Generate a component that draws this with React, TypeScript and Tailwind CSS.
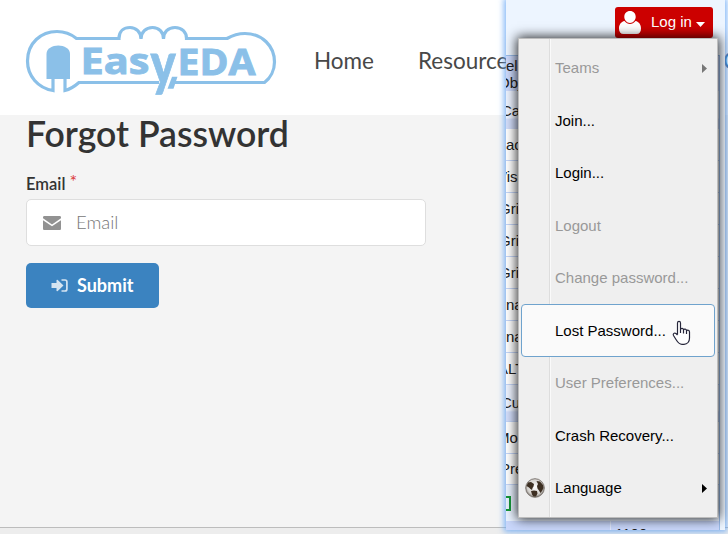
import React from 'react';

type MenuItem = { label: string; disabled?: boolean; arrow?: boolean; active?: boolean; globe?: boolean };

const menuItems: MenuItem[] = [
  { label: 'Teams', disabled: true, arrow: true },
  { label: 'Join...' },
  { label: 'Login...' },
  { label: 'Logout', disabled: true },
  { label: 'Change password...', disabled: true },
  { label: 'Lost Password...', active: true },
  { label: 'User Preferences...', disabled: true },
  { label: 'Crash Recovery...' },
  { label: 'Language', arrow: true, globe: true },
];

const gridRows = [
  { label: 'Background', look: 'h-8 bg-white' },
  { label: 'Visible Grid', look: 'h-8 bg-white' },
  { label: 'Grid Color', look: 'h-8 bg-white' },
  { label: 'Grid Style', look: 'h-8 bg-white' },
  { label: 'Grid Size', look: 'h-8 bg-white' },
  { label: 'Snap', look: 'h-8 bg-white' },
  { label: 'Snap Size', look: 'h-8 bg-white' },
  { label: 'ALT Snap', look: 'h-8 bg-white' },
  { label: 'Custom', look: 'h-[37px] bg-linear-to-b from-[#edf3ff] from-70% to-[#d3defb] to-75%' },
  { label: 'Mouse-X', look: 'h-8 bg-white' },
  { label: 'Preview', look: 'h-[31px] bg-white' },
];

const labelShift = [-10, -9, -7, -7, -7, -10, -10, -8, -5, -9, -6];

function Logo() {
  return (
    <svg className="mt-[25px] ml-[25px] h-[72px] w-[252px] shrink-0" viewBox="25 25 252 72" fill="none">
      <path
        d="M53 79V90.500C38 88 27.500 76 27.500 61C27.500 43 41 31.500 57 31.500C65 31.500 71 34 76.500 38.500H119C119 31 124 27.500 130 27.500C136 27.500 141 32 141 39C141 32 146 27.500 152.500 27.500C159 27.500 163.500 32 163.500 39C163.500 32 168 27.500 175 27.500C182 27.500 186.500 32 186.500 38.500H227C233 35 239 33.500 245 33.500C262 33.500 274.500 46 274.500 62C274.500 70 270.500 78 264.500 82.500H174.500M159 82.500H79C75 86 71 89 65 90.500V79"
        stroke="#8bc0e8"
        strokeWidth="3.200"
      />
      <path d="M46.500 79V54C46.500 42.500 70 42.500 70 54V79Z" fill="#8bc0e8" />
      <path d="M172 76.700H177.500L173.500 88.700H167.500Z" fill="#8bc0e8" />
      <g fill="#8bc0e8" stroke="#8bc0e8" strokeWidth="0.900" fontFamily="'Open Sans', sans-serif" fontWeight="700">
        <text x="80.500" y="73.500" fontSize="36" textLength="69" lengthAdjust="spacingAndGlyphs">Eas</text>
        <text x="177.500" y="75" fontSize="36" textLength="78" lengthAdjust="spacingAndGlyphs">EDA</text>
      </g>
      <text x="0" y="0" transform="translate(150.500 84.500) scale(0.8 1)" fill="#8bc0e8" stroke="#8bc0e8" strokeWidth="0.800" fontFamily="Lato, sans-serif" fontWeight="900" fontSize="59">y</text>
    </svg>
  );
}

function Globe() {
  return (
    <svg className="h-5 w-5" viewBox="0 0 20 20">
      <defs>
        <radialGradient id="globeShade" cx="50%" cy="45%" r="55%">
          <stop offset="0" stopColor="#fff" />
          <stop offset="0.75" stopColor="#d3d0cc" />
          <stop offset="1" stopColor="#77716b" />
        </radialGradient>
      </defs>
      <circle cx="10" cy="10" r="9.300" fill="url(#globeShade)" stroke="#77716b" strokeWidth="0.900" />
      <path d="M1.500 8L3 4.500L6 4L9 6L8.500 8.500L7.500 10L7 12L5.500 11L4 9.500ZM6 13L9 12.500L12 13L12.500 15.500L11 18.500H8.500L7 16.500ZM11.500 3L15 3.500L18 7L18.500 10L17 13L15.500 15L14 12.500L12.500 10.500L12 8L13 6Z" fill="#3d2f22" />
    </svg>
  );
}

function AccountMenu() {
  return (
    <div className="absolute top-[38px] left-3 flex h-[480px] w-[200px] flex-col border border-[#bdbdbd] bg-[linear-gradient(90deg,#efefef_30px,#dddddd_30px,#dddddd_31px,#fafafa_31px,#fafafa_32px,#efefef_32px)] px-0.5 pt-[3px] text-[15px] shadow-[0_0_11px_1px_rgba(0,0,0,0.85)]">
      {menuItems.map((item) => (
        <div
          key={item.label}
          className={`flex w-[194px] shrink-0 items-center rounded-[4px] border ${
            item.active ? '-mt-px h-[53.5px] border-[#6fa3cd] bg-[#fafafa] pt-px' : 'h-[52.5px] border-transparent'
          } ${item.disabled ? 'text-[#999999]' : 'text-black'}`}
        >
          <span className="flex w-[33px] shrink-0 pl-[3px]">{item.globe && <Globe />}</span>
          <span className="grow whitespace-nowrap">{item.label}</span>
          {item.arrow && (
            <svg className={`mr-[7px] h-[9px] w-[5px] ${item.disabled ? 'text-[#777777]' : 'text-black'}`} viewBox="0 0 5 9">
              <path d="M0 0L5 4.500L0 9Z" fill="currentColor" />
            </svg>
          )}
        </div>
      ))}
    </div>
  );
}

function EditorWindow() {
  return (
    <aside className="absolute top-0 left-[506px] h-[530px] w-[219px] font-['Liberation_Sans',Arial,sans-serif] shadow-[0_0_6px_2px_rgba(100,165,245,0.8)]">
      <div className="flex h-full flex-col overflow-hidden bg-[#edf5ff] text-[15px] text-[#202020]">
        <div className="flex h-[55px] shrink-0 justify-end pr-3 pt-[7px]">
          <button className="flex h-[31px] w-[98px] items-center rounded-[3px] bg-[#cc0000] pl-1 text-white">
            <svg className="h-[23px] w-[22px]" viewBox="0 0 22 23">
              <path d="M11 0C14.500 0 16.700 2.600 16.700 5.800S14.500 12 11 12S5.300 9 5.300 5.800S7.500 0 11 0ZM5.500 10C7 12 9 13 11 13S15 12 16.500 10C20 10.700 22 13.700 22 17.500C22 21 20.500 23 17.500 23H4.500C1.500 23 0 21 0 17.500C0 13.700 2 10.700 5.500 10Z" fill="#fff" />
            </svg>
            <span className="ml-2.5 whitespace-nowrap">Log in</span>
            <svg className="ml-1 mt-[3px] h-[5px] w-[9px]" viewBox="0 0 9 5">
              <path d="M0 0H9L4.500 5Z" fill="#fff" />
            </svg>
          </button>
        </div>
        <div className="flex w-[214px] grow flex-col overflow-hidden border-t border-r border-[#99bbe8]">
          <div className="h-[35px] shrink-0 overflow-hidden bg-[#ccd9fb] pt-px leading-[17px]">
            <div className="-ml-[10px]">Selected</div>
            <div className="-ml-[8px]">Objects</div>
          </div>
          <div className="h-[38px] shrink-0 bg-linear-to-b from-[#edf3ff] from-70% to-[#d3defb] to-75% leading-[40px]">
            <div className="-ml-[5px]">Canvas</div>
          </div>
          {gridRows.map((row, i) => (
            <div key={row.label} className={`flex shrink-0 items-center whitespace-nowrap border-b border-[#c5d6f8] pt-px ${row.look}`}>
              <span style={{ marginLeft: labelShift[i] }}>{row.label}</span>
            </div>
          ))}
          <div className="flex h-[36px] shrink-0 items-center bg-[#e9f2ff]">
            <div className="-ml-2 h-[15px] w-[13px] border-2 border-[#15983a]" />
          </div>
          <div className="flex grow overflow-hidden bg-[#c9d7fb]">
            <div className="w-[105px] border-r border-[#e1e9fd]" />
            <div className="pl-1 pt-[6px] text-[15px] leading-[14px]">1100</div>
          </div>
        </div>
      </div>
      <AccountMenu />
      <svg className="absolute left-[166px] top-[320px] h-[26px] w-5" viewBox="0 0 20 26">
        <path
          d="M5.500 14.500V3C5.500 0.800 8.500 0.800 8.500 3V9.500C9 7.800 11.500 8 11.500 10C12 8.500 14.500 8.800 14.500 10.800C15.500 9.500 17.500 10.300 17.500 12V18C17.500 21.500 15.500 24.300 12 24.300H10C7 24.300 5.500 22 4 19.500L1.500 15.500C0.500 13.500 2.500 12.500 4 13.500L5.500 15M8.500 9.500V13M11.500 10V13.500M14.500 11V14"
          fill="#fff"
          stroke="#26263a"
          strokeWidth="1.200"
          strokeLinejoin="round"
        />
      </svg>
    </aside>
  );
}

export default function App() {
  return (
    <div className="relative flex h-[534px] w-[728px] flex-col overflow-hidden bg-[#f4f4f4] font-['Lato',sans-serif] text-[#333333]">
      <header className="flex h-[115px] shrink-0 bg-white">
        <Logo />
        <nav className="ml-[37px] flex gap-[44px] pt-[45px] text-[22.500px] leading-8 text-[#484848]">
          <span>Home</span>
          <span className="w-[262px]">Resources</span>
          <span className="-ml-[1px] text-[#31699c]">Contact</span>
        </nav>
      </header>
      <main className="flex grow flex-col px-[26px]">
        <h1 className="h-[39px] text-[35.6px] leading-[37px] font-semibold">Forgot Password</h1>
        <label className="mt-5 flex h-[25px] text-[16.5px] leading-[21px] font-semibold">
          Email<span className="ml-1 -mt-[3px] text-[18px] font-normal text-[#db3b3b]">*</span>
        </label>
        <div className="flex h-[47px] w-[400px] items-center rounded-[5px] border border-[#dedede] bg-white pl-4">
          <svg className="h-[14px] w-[18px]" viewBox="0 0 18 14">
            <path d="M1.500 0H16.500C17.500 0 18 0.500 18 1.500V2.200L9 8.500L0 2.200V1.500C0 0.500 0.500 0 1.500 0ZM0 4.200L9 10.300L18 4.200V12.500C18 13.500 17.500 14 16.500 14H1.500C0.500 14 0 13.500 0 12.500Z" fill="#929292" />
          </svg>
          <span className="ml-[15px] text-[18.5px] font-light text-[#777777]">Email</span>
        </div>
        <button className="mt-[17px] flex h-[45px] w-[133px] items-center rounded-[5px] bg-[#3b83c0] pl-[25px] text-white">
          <svg className="h-[13px] w-[17px]" viewBox="0 0 17 13">
            <path d="M0.500 4H5.500V1L6.500 0.800L12.500 6.500L6.500 12.200L5.500 12V9H0.500Z" fill="#d5e4f1" />
            <path d="M10.500 1H14Q15.900 1 15.900 3V10Q15.900 12 14 12H10.500" fill="none" stroke="#d5e4f1" strokeWidth="1.700" />
          </svg>
          <span className="ml-[9px] text-[18px] font-bold">Submit</span>
        </button>
      </main>
      <footer className="h-[7px] shrink-0 border-t border-[#bcbcbc] bg-[#ededed]" />
      <EditorWindow />
    </div>
  );
}
